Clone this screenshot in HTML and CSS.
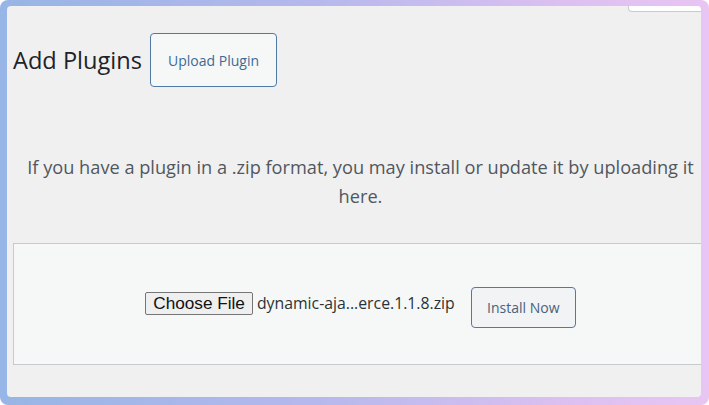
FILE: index.html
```html
<!DOCTYPE html>
<html lang="en">
<head>
<meta charset="utf-8">
<title>Add Plugins</title>
<link rel="stylesheet" href="styles.css">
</head>
<body>
<div class="frame">
  <div class="screen">
    <div class="screen-tab"></div>
    <div class="content">
      <div class="title-row">
        <h1 class="title">Add Plugins</h1>
        <a class="title-action">Upload Plugin</a>
      </div>
      <p class="install-help">If you have a plugin in a .zip format, you may install or update it by uploading it here.</p>
      <form class="upload-form">
        <span class="file-button">Choose File</span>
        <span class="file-name">dynamic-aja...erce.1.1.8.zip</span>
        <span class="install-button">Install Now</span>
      </form>
    </div>
  </div>
</div>
</body>
</html>
```
FILE: styles.css
```css
html, body {
  margin: 0;
  padding: 0;
}
body {
  width: 709px;
  height: 405px;
  overflow: hidden;
  font-family: "Open Sans", "Noto Sans", sans-serif;
}
.frame {
  box-sizing: border-box;
  width: 709px;
  height: 405px;
  padding: 6px 8px 8px 7px;
  border-radius: 8px;
  background: linear-gradient(90deg, #97b5e6 0%, #b6b8ec 45%, #dcc0f1 80%, #e8c5f3 100%);
}
.screen {
  position: relative;
  height: 100%;
  background: #f0f0f1;
  border-radius: 4px;
  overflow: hidden;
}
.screen-tab {
  position: absolute;
  top: 0;
  right: 0;
  width: 72px;
  height: 5px;
  background: #ffffff;
  border: 1px solid #c9cacd;
  border-top: none;
  border-right: none;
  border-radius: 0 0 0 4px;
}
.content {
  width: 695px;
  margin-left: 6px;
  padding-top: 27px;
}
.title-row {
  display: flex;
  align-items: center;
  gap: 8px;
}
.title {
  margin: 0;
  font-size: 23.6px;
  font-weight: 400;
  color: #1d2327;
  line-height: 1.3;
}
.title-action {
  box-sizing: border-box;
  display: flex;
  align-items: center;
  justify-content: center;
  width: 127px;
  height: 54px;
  border: 1px solid #4f79a2;
  border-radius: 4px;
  background: #f6f7f7;
  color: #3d6b95;
  font-size: 14px;
}
.install-help {
  margin: 66px 0 0;
  text-align: center;
  font-size: 18.2px;
  line-height: 29px;
  color: #50575e;
}
.upload-form {
  box-sizing: border-box;
  display: flex;
  justify-content: center;
  align-items: flex-start;
  margin: 32px 0 0;
  height: 122px;
  padding-top: 43px;
  border: 1px solid #c9cacd;
  background: #f6f7f7;
}
.file-button {
  box-sizing: border-box;
  margin-top: 5px;
  height: 23px;
  padding: 0 7px;
  border: 1px solid #767676;
  border-radius: 2px;
  background: #efefef;
  font-family: "Liberation Sans", Arial, sans-serif;
  font-size: 17.2px;
  line-height: 21px;
  color: #111;
}
.file-name {
  margin: 4px 0 0 4px;
  font-size: 15.8px;
  line-height: 24px;
  color: #2c3338;
}
.install-button {
  box-sizing: border-box;
  display: flex;
  align-items: center;
  justify-content: center;
  margin-left: 16px;
  width: 105px;
  height: 41px;
  border: 1px solid #5b7793;
  border-radius: 4px;
  background: #f1f3f5;
  color: #4a6179;
  font-size: 14px;
}
```
